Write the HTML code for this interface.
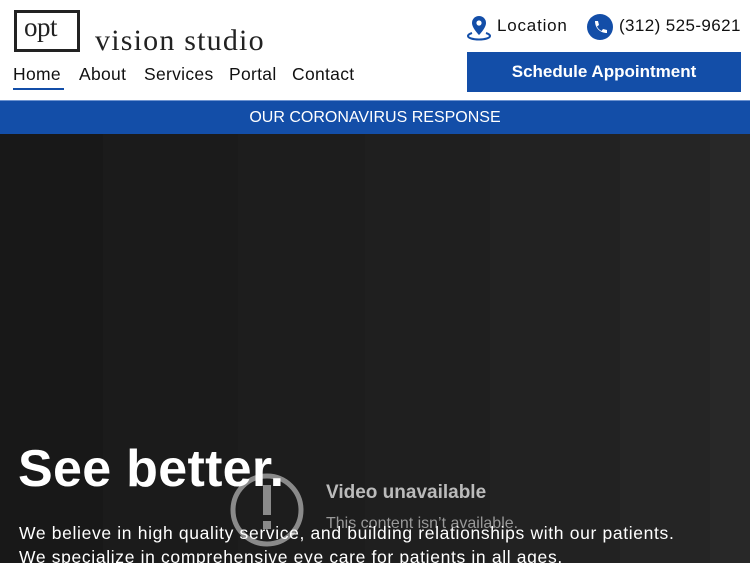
<!DOCTYPE html><html><head><style>
*{margin:0;padding:0;box-sizing:border-box}
body{width:750px;height:563px;overflow:hidden;font-family:"Liberation Sans",sans-serif;background:#fff;position:relative}
.a{position:absolute;white-space:nowrap}
.nav span{position:absolute;top:64px;font-size:17.5px;color:#111;letter-spacing:0.3px}
</style></head><body>
<div class="a" style="left:14px;top:10px;width:66px;height:42px;border:3px solid #222"></div>
<div class="a" style="left:24px;top:12px;font-family:'Liberation Serif',serif;font-size:27px;color:#222;letter-spacing:-0.5px">opt</div>
<div class="a" style="left:95px;top:24px;font-family:'Liberation Serif',serif;font-size:30px;color:#222;letter-spacing:1.2px">vision studio</div>
<div class="nav">
<span style="left:13px">Home</span><span style="left:79px">About</span><span style="left:144px">Services</span><span style="left:229px">Portal</span><span style="left:292px">Contact</span></div>
<div class="a" style="left:13px;top:88px;width:51px;height:2px;background:#134ea8"></div>
<svg class="a" style="left:466px;top:14px" width="26" height="27" viewBox="0 0 26 27"><path d="M13 2a7 7 0 0 0-7 7c0 5 7 12 7 12s7-7 7-12a7 7 0 0 0-7-7z" fill="#134ea8"/><circle cx="13" cy="9" r="2.6" fill="#fff"/><path d="M6 19c-3 1-4 2-4 3 0 2 5 3.5 11 3.5s11-1.5 11-3.5c0-1-1-2-4-3" fill="none" stroke="#134ea8" stroke-width="2"/></svg>
<div class="a" style="left:497px;top:16px;font-size:17px;color:#111;letter-spacing:0.8px">Location</div>
<svg class="a" style="left:587px;top:14px" width="26" height="26" viewBox="0 0 26 26"><circle cx="13" cy="13" r="13" fill="#134ea8"/><path d="M8 7l3 0 1 4-2 1.5c1 2 2.5 3.5 4.5 4.5L16 15l4 1v3c-7 0-12-5-12-12z" fill="#fff"/></svg>
<div class="a" style="left:619px;top:16px;font-size:17px;color:#111;letter-spacing:0.4px">(312) 525-9621</div>
<div class="a" style="left:467px;top:52px;width:274px;height:40px;background:#134ea8;color:#fff;font-weight:bold;font-size:17px;text-align:center;line-height:40px">Schedule Appointment</div>
<div class="a" style="left:0;top:100px;width:750px;height:34px;background:#134ea8;color:#fff;font-size:16px;text-align:center;line-height:34px;border-top:1px solid #6d93d0">OUR CORONAVIRUS RESPONSE</div>
<div class="a" style="left:0;top:134px;width:750px;height:429px;background:linear-gradient(90deg,#181818 0 103px,#1b1b1b 103px 238px,#1d1d1d 238px 365px,#1f1f1f 365px 490px,#222 490px 620px,#252525 620px 710px,#282828 710px)"></div>
<svg class="a" style="left:228px;top:471px" width="78" height="78" viewBox="0 0 78 78"><circle cx="39" cy="39" r="34" fill="none" stroke="#8a8a8a" stroke-width="5"/><rect x="35" y="14" width="8" height="30" fill="#8a8a8a"/><rect x="35" y="50" width="8" height="8" fill="#8a8a8a"/></svg>
<div class="a" style="left:326px;top:482px;font-size:19px;color:#bbb;font-weight:bold">Video unavailable</div>
<div class="a" style="left:326px;top:515px;font-size:16px;color:#999">This content isn’t available.</div>
<div class="a" style="left:18px;top:439px;font-size:52px;font-weight:bold;color:#fff;letter-spacing:0.3px">See better.</div>
<div class="a" style="left:19px;top:523px;font-size:17.5px;color:#fff;letter-spacing:0.65px">We believe in high quality service, and building relationships with our patients.</div>
<div class="a" style="left:19px;top:547px;font-size:17.5px;color:#fff;letter-spacing:0.65px">We specialize in comprehensive eye care for patients in all ages.</div>
</body></html>
